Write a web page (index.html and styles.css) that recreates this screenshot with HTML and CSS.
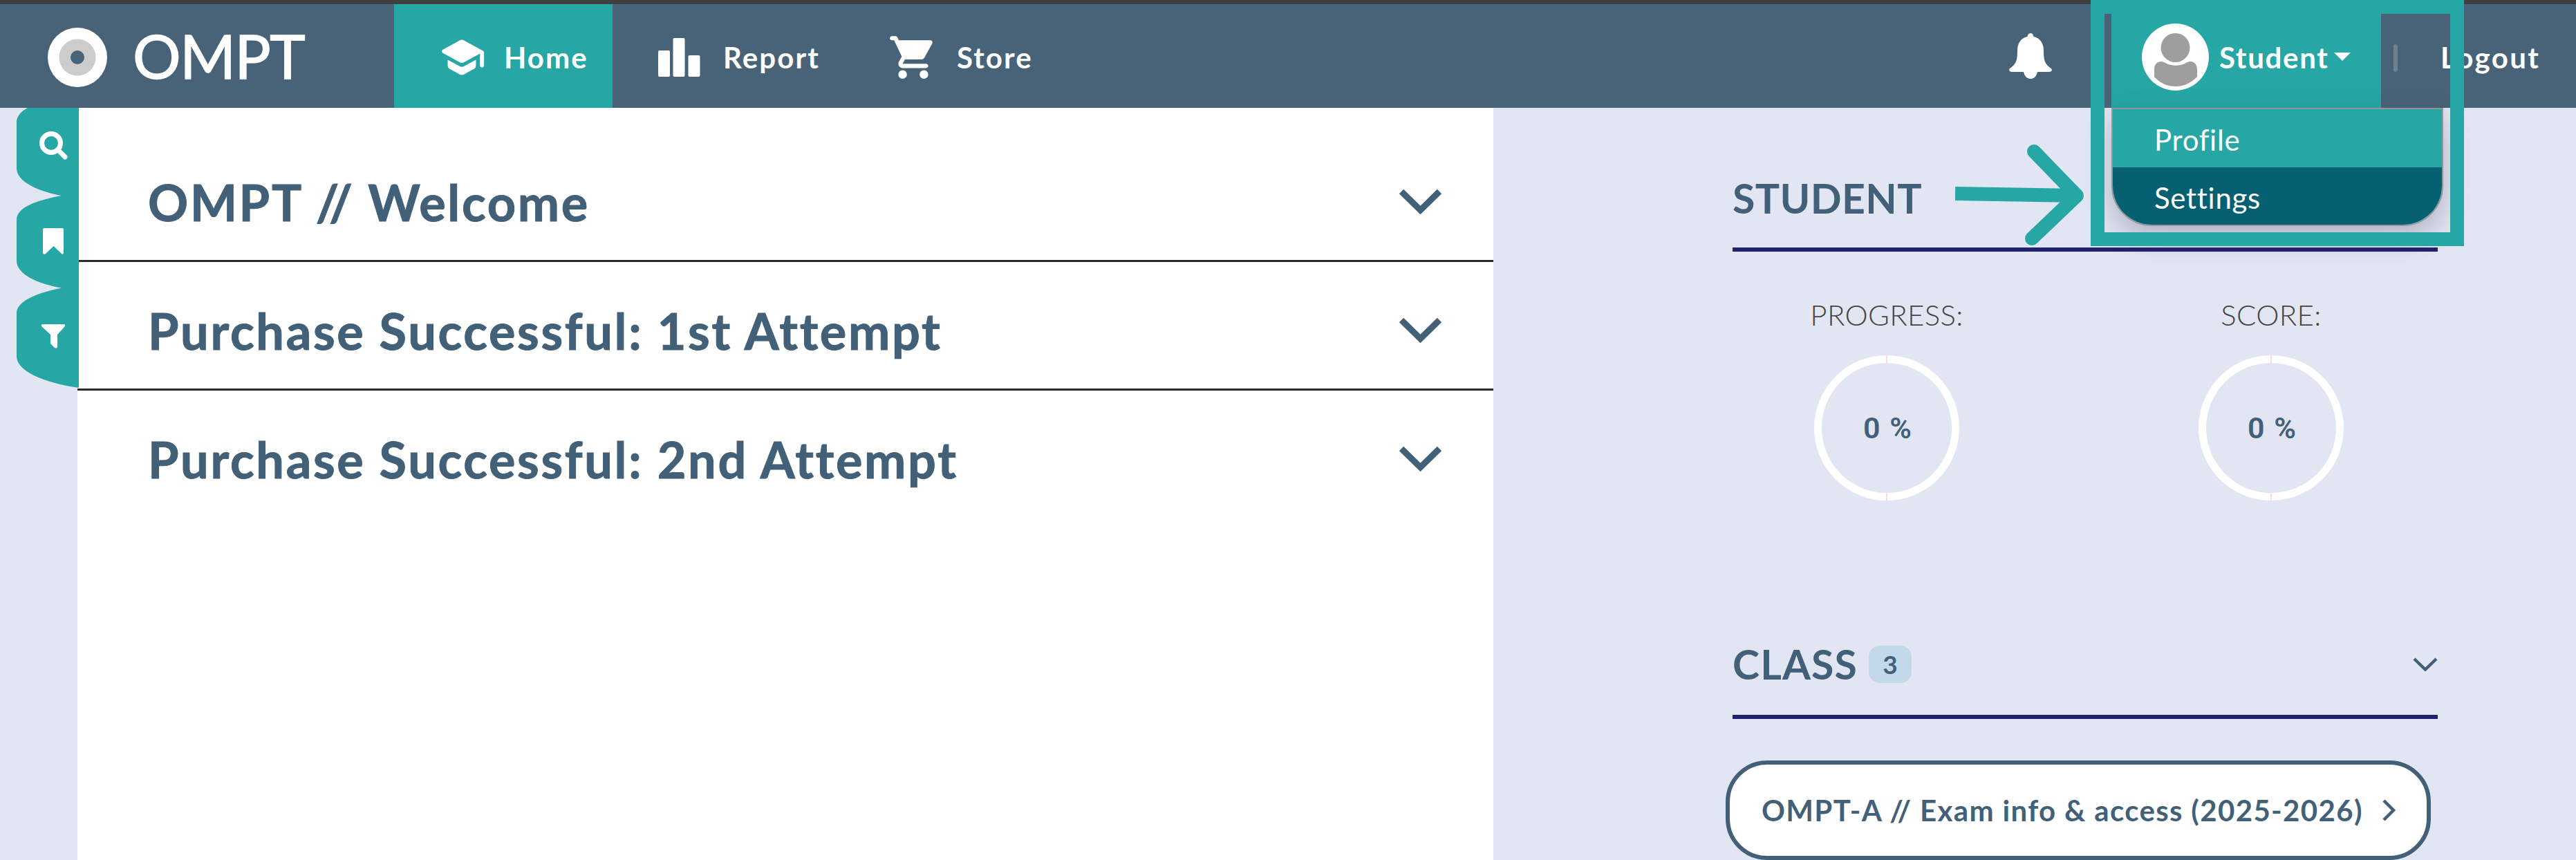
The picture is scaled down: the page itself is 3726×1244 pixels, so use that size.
FILE: index.html
```html
<!DOCTYPE html>
<html lang="en">
<head>
    <meta charset="UTF-8">
    <meta name="viewport" content="width=device-width, initial-scale=1.0">
    <title>OMPT</title>
    <link rel="stylesheet" href="styles.css">
</head>
<body>
    <header class="topbar">
        <a class="brand">
            <svg class="brand-mark" viewBox="0 0 86 86">
                <circle cx="43" cy="43" r="43" fill="#fff"/>
                <circle cx="43" cy="43" r="26.5" fill="#ccc"/>
                <circle cx="43" cy="43" r="10" fill="#486378"/>
            </svg>
            <span class="brand-name">OMPT</span>
        </a>
        <nav class="nav">
            <a class="nav-item active">
                <svg class="nav-icon" viewBox="0 0 24 24"><path d="M5 13.18v2.81c0 .73.4 1.41 1.04 1.76l5 2.73c.6.33 1.32.33 1.92 0l5-2.73c.64-.35 1.04-1.03 1.04-1.76v-2.81l-6.04 3.3c-.6.33-1.32.33-1.92 0L5 13.18zm6.04-9.66l-8.43 4.6c-.69.38-.69 1.38 0 1.76l8.43 4.6c.6.33 1.32.33 1.92 0L21 10.09V16c0 .55.45 1 1 1s1-.45 1-1V9.59c0-.37-.2-.7-.52-.88l-9.52-5.19c-.6-.32-1.32-.32-1.92 0z"/></svg>
                <span>Home</span>
            </a>
            <a class="nav-item report">
                <svg class="bars-icon" viewBox="0 0 61 56"><rect x="0" y="18" width="17" height="38" rx="2"/><rect x="21.5" y="0" width="17" height="56" rx="2"/><rect x="43.5" y="25" width="17" height="31" rx="2"/></svg>
                <span>Report</span>
            </a>
            <a class="nav-item store">
                <svg class="cart-icon" viewBox="0 0 24 24"><path d="M7 18c-1.1 0-1.99.9-1.99 2S5.9 22 7 22s2-.9 2-2-.9-2-2-2zM1 3c0 .55.45 1 1 1h1l3.6 7.59-1.35 2.44C4.52 15.37 5.48 17 7 17h11c.55 0 1-.45 1-1s-.45-1-1-1H7l1.1-2h7.45c.75 0 1.41-.41 1.75-1.03l3.58-6.49c.37-.66-.11-1.48-.87-1.48H5.21l-.67-1.43c-.16-.35-.52-.57-.9-.57H2c-.55 0-1 .45-1 1zm16 15c-1.1 0-1.99.9-1.99 2s.89 2 1.99 2 2-.9 2-2-.9-2-2-2z"/></svg>
                <span>Store</span>
            </a>
        </nav>
        <div class="account">
            <svg class="bell" viewBox="0 0 62 66"><path d="M31 0c3 0 4 3 4.500 5C45 7 50 15 50 25c0 15 2 20 11 26 2 3 0 5-3 5H41c-1 6-5 10-10 10s-9-4-10-10H4c-3 0-5-2-3-5 9-6 11-11 11-26 0-10 5-18 14.500-20C27 3 28 0 31 0z"/></svg>
            <div class="user">
                <svg class="avatar" viewBox="0 0 97 97">
                    <circle cx="48.500" cy="48.500" r="48.500" fill="#fff"/>
                    <circle cx="48.500" cy="35" r="21" fill="#9e9e9e"/>
                    <path d="M18 67c0-8 4-12 10-12 3 0 4 1 6 2 9 5 21 5 30 0 2-1 3-2 6-2 6 0 10 4 10 12v10C70 87 60 91 49 91S27 87 18 77z" fill="#9e9e9e"/>
                </svg>
                <span class="user-name">Student</span>
                <svg class="caret" viewBox="0 0 24 12"><path d="M0 0h24L12 12z"/></svg>
                <div class="dropdown">
                    <a class="dropdown-item">Profile</a>
                    <a class="dropdown-item selected">Settings</a>
                </div>
            </div>
            <span class="divider"></span>
            <a class="logout">Logout</a>
        </div>
    </header>

    <div class="page">
        <aside class="rail">
            <svg class="rail-shape" viewBox="24 156 90 405"><path d="M24 243C24 262 52 276 89 283C52 290 24 300 24 318V377C24 396 52 410 89 416.500C52 424 24 436 24 453V515C24 537 62 553 114 561V156H40C30 161 24 169 24 176z"/></svg>
            <svg class="rail-icon" viewBox="0 0 41 41"><circle cx="17" cy="17" r="13.500" fill="none" stroke="#fff" stroke-width="7"/><path d="M27 27l10 10" stroke="#fff" stroke-width="7" stroke-linecap="round"/></svg>
            <svg class="rail-icon" viewBox="0 0 41 41"><path d="M7 2h26q2 0 2 2v34q-1 3-3 1L20.500 28 9 39q-3 2-4-1V4q0-2 2-2z" fill="#fff"/></svg>
            <svg class="rail-icon" viewBox="0 0 41 41"><path d="M4 3h32q2 1 1 3L26 18v18q-1 3-4 1l-6-6V18L3 6q-1-2 1-3z" fill="#fff"/></svg>
        </aside>

        <main class="content">
            <section class="row">
                <h2>OMPT // Welcome</h2>
                <svg class="chevron" viewBox="0 0 63 38"><path d="M4 4l27.500 27L59 4"/></svg>
            </section>
            <section class="row">
                <h2>Purchase Successful: 1st Attempt</h2>
                <svg class="chevron" viewBox="0 0 63 38"><path d="M4 4l27.500 27L59 4"/></svg>
            </section>
            <section class="row">
                <h2>Purchase Successful: 2nd Attempt</h2>
                <svg class="chevron" viewBox="0 0 63 38"><path d="M4 4l27.500 27L59 4"/></svg>
            </section>
        </main>

        <aside class="sidebar">
            <div class="side-head">
                <h3>STUDENT</h3>
            </div>
            <div class="stats">
                <div class="stat">
                    <span class="stat-label">PROGRESS:</span>
                    <div class="ring"><span>0 %</span></div>
                </div>
                <div class="stat">
                    <span class="stat-label">SCORE:</span>
                    <div class="ring"><span>0 %</span></div>
                </div>
            </div>
            <div class="side-head class-head">
                <h3>CLASS</h3>
                <span class="badge">3</span>
                <svg class="chevron-small" viewBox="0 0 36 20"><path d="M2 2l16 15.500L34 2"/></svg>
            </div>
            <a class="class-link">
                <span>OMPT-A // Exam info &amp; access (2025-2026)</span>
                <svg class="chevron-right" viewBox="0 0 20 32"><path d="M3 2l14 14L3 30"/></svg>
            </a>
        </aside>
    </div>

    <!-- callout pointing at the settings entry -->
    <div class="callout"></div>
    <svg class="arrow" viewBox="2828 200 200 160"><path d="M2828 280L3003 283" stroke-linecap="butt"/><path d="M2942 219L3004 283L2939 345"/></svg>
</body>
</html>
```

FILE: styles.css
```css
* {
    box-sizing: border-box;
}
body {
    margin: 0;
    height: 1244px;
    overflow: hidden;
    position: relative;
    background: #e2e6f2;
    color: #426078;
    font-family: Lato, "Liberation Sans", sans-serif;
    font-variant-ligatures: none;
}
svg {
    display: block;
    flex: none;
}
span, h2, h3, a {
    white-space: nowrap;
}
h2, h3 {
    margin: 0;
    font-weight: 700;
}

/* top bar */
.topbar {
    height: 156px;
    display: flex;
    background: #486378;
    border-top: 6px solid #3f3f3f;
    color: #fff;
    fill: #fff;
    font-size: 42px;
    font-weight: 700;
}
.brand {
    width: 570px;
    padding: 0 0 0 69px;
    display: flex;
    align-items: center;
}
.brand-mark {
    width: 86px;
    height: 86px;
    margin-top: 4px;
}
.brand-name {
    margin-left: 37px;
    font-size: 87px;
    font-weight: 400;
    line-height: 150px;
    letter-spacing: -1.5px;
    -webkit-text-stroke: 1.5px #fff;
}
.nav {
    display: flex;
    letter-spacing: 2.1px;
}
.nav-item {
    display: flex;
    align-items: center;
    padding-top: 4px;
}
.nav-item.active {
    width: 316px;
    padding-left: 63px;
    background: #26a6a5;
}
.nav-icon {
    width: 70px;
    height: 70px;
    margin-right: 26px;
}
.report {
    width: 398px;
    padding-left: 66px;
}
.bars-icon {
    width: 61px;
    height: 56px;
    margin-right: 33px;
}
.cart-icon {
    width: 74px;
    height: 74px;
    margin-right: 26px;
}
.account {
    display: flex;
    align-items: center;
    margin-left: auto;
    width: 820px;
}
.bell {
    width: 62px;
    height: 66px;
}
.user {
    position: relative;
    width: 390px;
    height: 150px;
    margin-left: 86px;
    padding: 2px 0 0 44px;
    display: flex;
    align-items: center;
    background: #26a6a5;
}
.avatar {
    width: 97px;
    height: 97px;
    margin-right: 15px;
}
.user-name {
    width: 166px;
    padding-top: 2px;
    letter-spacing: 1.7px;
}
.caret {
    width: 24px;
    height: 12px;
}
.divider {
    width: 6px;
    height: 40px;
    margin: 6px 62px 0 18px;
    border-radius: 3px;
    background: #6c8191;
}
.logout {
    padding-top: 4px;
    letter-spacing: 2.4px;
}
.dropdown {
    position: absolute;
    top: 150px;
    left: 0;
    width: 480px;
    height: 171px;
    border: 2px solid #8e9799;
    border-radius: 0 0 58px 58px;
    overflow: hidden;
    box-shadow: 0 16px 40px rgba(70, 60, 90, 0.3);
    font-weight: 400;
    letter-spacing: 0.7px;
}
.dropdown-item {
    display: flex;
    align-items: center;
    height: 84px;
    padding: 4px 0 0 60px;
    background: #26a6a5;
}
.dropdown-item.selected {
    background: #075f72;
}

/* page columns */
.page {
    display: flex;
    height: 1088px;
}
.rail {
    position: relative;
    width: 112px;
    padding: 34px 0 0 57px;
    display: flex;
    flex-direction: column;
    gap: 97px;
}
.rail-shape {
    position: absolute;
    top: 0;
    left: 24px;
    width: 90px;
    height: 405px;
    fill: #26a6a5;
}
.rail-icon {
    position: relative;
    width: 41px;
    height: 41px;
}
.content {
    width: 2048px;
    padding-top: 37px;
    background: #fff;
}
.row {
    height: 186px;
    padding: 14px 74px 0 102px;
    display: flex;
    align-items: center;
    justify-content: space-between;
    border-bottom: 3px solid #2a2a2a;
}
.row:last-child {
    border-bottom-color: transparent;
}
.row h2 {
    font-size: 72px;
    line-height: 84px;
    letter-spacing: 2.7px;
    -webkit-text-stroke: 1px #426078;
}
.chevron {
    width: 63px;
    height: 38px;
    fill: none;
    stroke: #426078;
    stroke-width: 9;
}

/* sidebar */
.sidebar {
    width: 1020px;
    margin-left: 346px;
}
.side-head {
    height: 208px;
    padding-top: 60px;
    display: flex;
    align-items: center;
    border-bottom: 6px solid #20206c;
}
.side-head h3 {
    font-size: 59px;
    line-height: 70px;
    letter-spacing: 0.4px;
}
.stats {
    display: flex;
    justify-content: space-between;
    height: 518px;
    padding: 66px 136px 0 118px;
}
.stat {
    width: 210px;
    display: flex;
    flex-direction: column;
    align-items: center;
}
.stat-label {
    color: #444;
    font-size: 42px;
    font-weight: 300;
    line-height: 50px;
    letter-spacing: 0.3px;
}
.ring {
    position: relative;
    width: 210px;
    height: 210px;
    margin-top: 34px;
    padding-left: 2px;
    display: flex;
    align-items: center;
    justify-content: center;
    border: 11px solid #fff;
    border-radius: 50%;
    font-family: Roboto, sans-serif;
    font-size: 43px;
    font-weight: 600;
    word-spacing: 3px;
}
.ring::before,
.ring::after {
    content: "";
    position: absolute;
    left: 93px;
    width: 2px;
    height: 11px;
    background: #fbdcd5;
}
.ring::before {
    top: -11px;
}
.ring::after {
    bottom: -11px;
}
.class-head {
    height: 158px;
    padding-top: 6px;
}
.class-head h3 {
    letter-spacing: 1.1px;
}
.badge {
    width: 62px;
    height: 54px;
    margin-left: 16px;
    border-radius: 16px;
    background: #c3d8e8;
    font-size: 37px;
    font-weight: 700;
    line-height: 54px;
    text-align: center;
}
.chevron-small {
    width: 36px;
    height: 20px;
    margin-left: auto;
    fill: none;
    stroke: #426078;
    stroke-width: 4.5;
}
.class-link {
    width: 1020px;
    height: 144px;
    margin: 60px 0 0 -10px;
    padding: 0 45px 0 46px;
    display: flex;
    align-items: center;
    justify-content: space-between;
    border: 6px solid #426078;
    border-radius: 60px;
    background: #fff;
    font-size: 42px;
    font-weight: 700;
    letter-spacing: 1.35px;
}
.chevron-right {
    width: 20px;
    height: 32px;
    fill: none;
    stroke: #426078;
    stroke-width: 4.5;
}

/* callout */
.callout {
    position: absolute;
    top: 0;
    left: 3024px;
    width: 540px;
    height: 356px;
    border: 20px solid #26a6a5;
}
.arrow {
    position: absolute;
    top: 200px;
    left: 2828px;
    width: 200px;
    height: 160px;
    fill: none;
    stroke: #26a6a5;
    stroke-width: 20;
    stroke-linecap: round;
    stroke-linejoin: round;
}
```
